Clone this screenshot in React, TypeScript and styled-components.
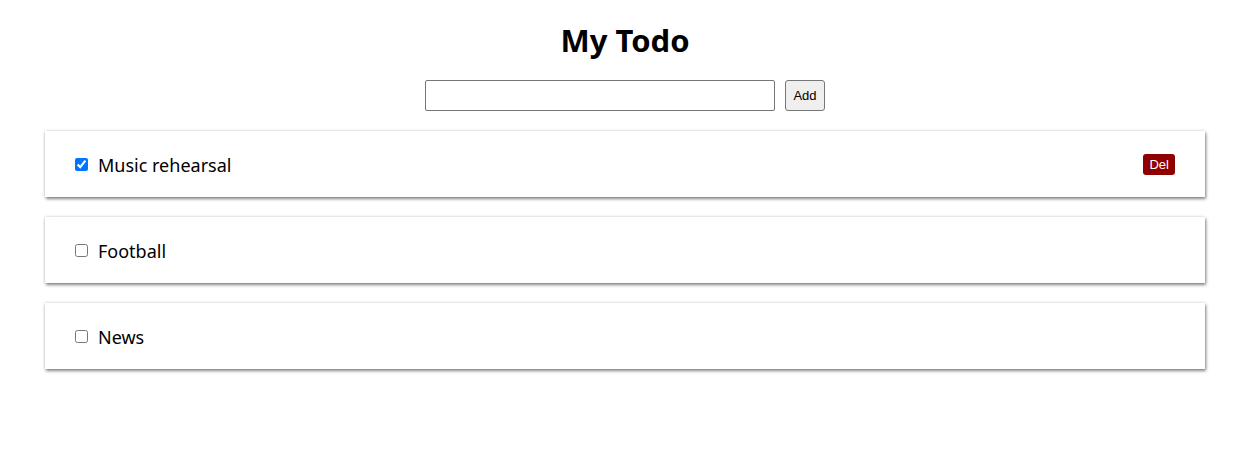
import React, { useState } from "react";
import styled, { createGlobalStyle } from "styled-components";

const GlobalStyle = createGlobalStyle`
  body {
    margin: 0;
    background: #ffffff;
    font-family: "Noto Sans", "Open Sans", sans-serif;
  }
`;

const Page = styled.div`
  width: 1250px;
  display: flex;
  flex-direction: column;
  align-items: center;
  padding-bottom: 40px;
`;

const Title = styled.h1`
  margin: 20px 0 20px;
  font-size: 31px;
  font-weight: 700;
  line-height: 40px;
  color: #000;
`;

const Form = styled.form`
  display: flex;
  align-items: center;
  gap: 10px;
  margin-bottom: 20px;
`;

const TextInput = styled.input`
  box-sizing: border-box;
  width: 350px;
  height: 31px;
  border: 1px solid #767676;
  border-radius: 2px;
  padding: 2px 6px;
  font-size: 14px;
`;

const AddButton = styled.button`
  box-sizing: border-box;
  height: 31px;
  width: 40px;
  padding: 0;
  border: 1px solid #767676;
  border-radius: 3px;
  background: #efefef;
  font-family: "Liberation Sans", Arial, sans-serif;
  font-size: 13px;
  color: #000;
`;

const List = styled.ul`
  list-style: none;
  margin: 0;
  padding: 0;
  width: 1160px;
  display: flex;
  flex-direction: column;
  gap: 20px;
`;

const Card = styled.li`
  box-sizing: border-box;
  height: 66px;
  display: flex;
  align-items: center;
  padding: 0 30px 0 30px;
  background: #fff;
  box-shadow: 0 0 3px rgba(0, 0, 0, 0.18), 1px 2px 3px rgba(0, 0, 0, 0.45);
`;

const Check = styled.input`
  width: 13px;
  height: 13px;
  margin: 1px 10px 0 0;
  accent-color: #0075ff;
`;

const Label = styled.span`
  flex: 1;
  padding-top: 2px;
  font-size: 18px;
  color: #000;
`;

const DelButton = styled.button`
  height: 21px;
  padding: 0 6px;
  border: none;
  border-radius: 3px;
  background: #8f0000;
  color: #fff;
  font-family: "Liberation Sans", Arial, sans-serif;
  font-size: 13px;
`;

type Todo = { id: number; text: string; done: boolean };

export default function App() {
  const [todos, setTodos] = useState<Todo[]>([
    { id: 1, text: "Music rehearsal", done: true },
    { id: 2, text: "Football", done: false },
    { id: 3, text: "News", done: false },
  ]);
  const [value, setValue] = useState("");

  const add = (e: React.FormEvent) => {
    e.preventDefault();
    if (!value.trim()) return;
    setTodos([...todos, { id: Date.now(), text: value, done: false }]);
    setValue("");
  };

  const toggle = (id: number) =>
    setTodos(todos.map((t) => (t.id === id ? { ...t, done: !t.done } : t)));

  return (
    <>
      <GlobalStyle />
      <Page>
        <Title>My Todo</Title>
        <Form onSubmit={add}>
          <TextInput value={value} onChange={(e) => setValue(e.target.value)} />
          <AddButton type="submit">Add</AddButton>
        </Form>
        <List>
          {todos.map((t) => (
            <Card key={t.id}>
              <Check type="checkbox" checked={t.done} onChange={() => toggle(t.id)} />
              <Label>{t.text}</Label>
              {t.done && (
                <DelButton onClick={() => setTodos(todos.filter((x) => x.id !== t.id))}>
                  Del
                </DelButton>
              )}
            </Card>
          ))}
        </List>
      </Page>
    </>
  );
}
